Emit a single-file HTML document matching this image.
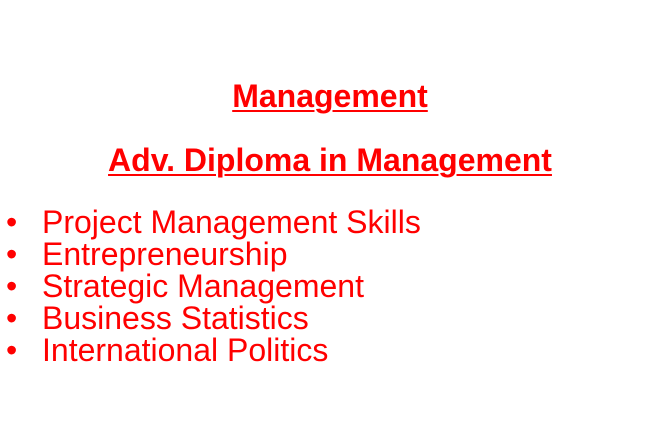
<!DOCTYPE html>
<html><head><style>
body{margin:0;width:660px;height:440px;background:#fff;font-family:"Liberation Sans",Arial,sans-serif;color:#f00;position:relative;overflow:hidden}
.h{position:absolute;left:0;width:660px;text-align:center;font-weight:bold;font-size:32px;line-height:36px;text-decoration:underline;text-decoration-thickness:2px;text-underline-offset:3px}
.li{position:absolute;left:0;font-size:32px;line-height:32px}
.li span{position:absolute;left:6px}
.li b{font-weight:normal;position:absolute;left:42px;white-space:nowrap}
</style></head><body>
<div class="h" style="top:78px">Management</div>
<div class="h" style="top:142px">Adv. Diploma in Management</div>
<div class="li" style="top:206px"><span>•</span><b>Project Management Skills</b></div>
<div class="li" style="top:238px"><span>•</span><b>Entrepreneurship</b></div>
<div class="li" style="top:270px"><span>•</span><b>Strategic Management</b></div>
<div class="li" style="top:302px"><span>•</span><b>Business Statistics</b></div>
<div class="li" style="top:334px"><span>•</span><b>International Politics</b></div>
</body></html>
